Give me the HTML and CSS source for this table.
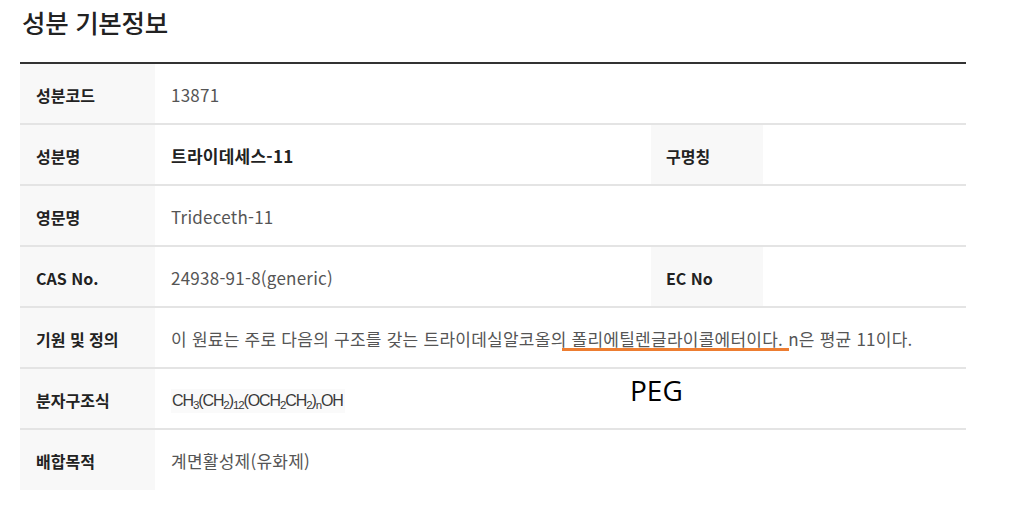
FILE: index.html
```html
<!DOCTYPE html>
<html lang="ko">
<head>
<meta charset="utf-8">
<title>성분 기본정보</title>
<link rel="stylesheet" href="styles.css">
</head>
<body>
<section class="info">
  <h2 class="title">성분 기본정보</h2>
  <div class="table-wrap">
    <table class="spec">
      <colgroup>
        <col class="c-th1">
        <col class="c-td1">
        <col class="c-th2">
        <col class="c-td2">
      </colgroup>
      <tbody>
        <tr>
          <th>성분코드</th>
          <td colspan="3">13871</td>
        </tr>
        <tr>
          <th>성분명</th>
          <td class="strong">트라이데세스-11</td>
          <th>구명칭</th>
          <td></td>
        </tr>
        <tr>
          <th>영문명</th>
          <td colspan="3">Trideceth-11</td>
        </tr>
        <tr>
          <th>CAS No.</th>
          <td>24938-91-8(generic)</td>
          <th>EC No</th>
          <td></td>
        </tr>
        <tr>
          <th>기원 및 정의</th>
          <td colspan="3">이 원료는 주로 다음의 구조를 갖는 트라이데실알코올의<span class="mark"> 폴리에틸렌글라이콜에터이다. </span>n은 평균 11이다.</td>
        </tr>
        <tr>
          <th>분자구조식</th>
          <td colspan="3"><span class="formula">CH<sub>3</sub>(CH<sub>2</sub>)<sub>12</sub>(OCH<sub>2</sub>CH<sub>2</sub>)<sub>n</sub>OH</span></td>
        </tr>
        <tr>
          <th>배합목적</th>
          <td colspan="3">계면활성제(유화제)</td>
        </tr>
      </tbody>
    </table>
    <span class="note">PEG</span>
  </div>
</section>
</body>
</html>
```
FILE: styles.css
```css
html, body {
  margin: 0;
  padding: 0;
  background: #ffffff;
}
body {
  font-family: "Noto Sans CJK KR", "Noto Sans", sans-serif;
  color: #555555;
}
.info {
  padding: 0 58px 0 20px;
}
.title {
  margin: 0;
  padding: 4px 0 0 2px;
  height: 62px;
  box-sizing: border-box;
  font-size: 25.5px;
  font-weight: 500;
  line-height: 36px;
  color: #222222;
  letter-spacing: -0.3px;
}
.table-wrap {
  position: relative;
}
.spec {
  width: 946px;
  border-collapse: collapse;
  table-layout: fixed;
  border-top: 2px solid #333333;
}
.c-th1 { width: 135px; }
.c-td1 { width: 496px; }
.c-th2 { width: 112px; }
.c-td2 { width: 203px; }
.spec tr {
  height: 61px;
}
.spec th,
.spec td {
  border-bottom: 2px solid #e4e4e4;
  font-size: 16px;
  line-height: 24px;
  text-align: left;
  vertical-align: middle;
  padding: 2px 15px 0 16px;
  box-sizing: border-box;
  height: 61px;
}
.spec tr:last-child th,
.spec tr:last-child td {
  border-bottom: none;
  height: 59px;
}
.spec th {
  background: #f8f8f8;
  color: #222222;
  font-weight: 700;
}
.spec th + td + th {
  padding-left: 15px;
}
.spec td {
  color: #555555;
  font-weight: 400;
  font-size: 17px;
  letter-spacing: 0.25px;
}
.spec td.strong {
  color: #222222;
  font-weight: 700;
}
.mark {
  position: relative;
}
.mark::after {
  content: "";
  position: absolute;
  left: -5px;
  right: -1px;
  bottom: 0;
  height: 3px;
  background: #ed7d31;
}
.formula {
  display: inline-block;
  font-family: "Liberation Sans", Arial, sans-serif;
  font-size: 16px;
  line-height: 24px;
  letter-spacing: -1.1px;
  color: #3a3a3a;
  background: #fafafa;
  padding: 0 2px 0 1px;
}
.formula sub {
  font-size: 11.5px;
  vertical-align: -3px;
  line-height: 0;
}
.note {
  position: absolute;
  left: 610px;
  top: 310px;
  font-family: "Open Sans", sans-serif;
  font-size: 28px;
  line-height: 36px;
  color: #000000;
}
```
